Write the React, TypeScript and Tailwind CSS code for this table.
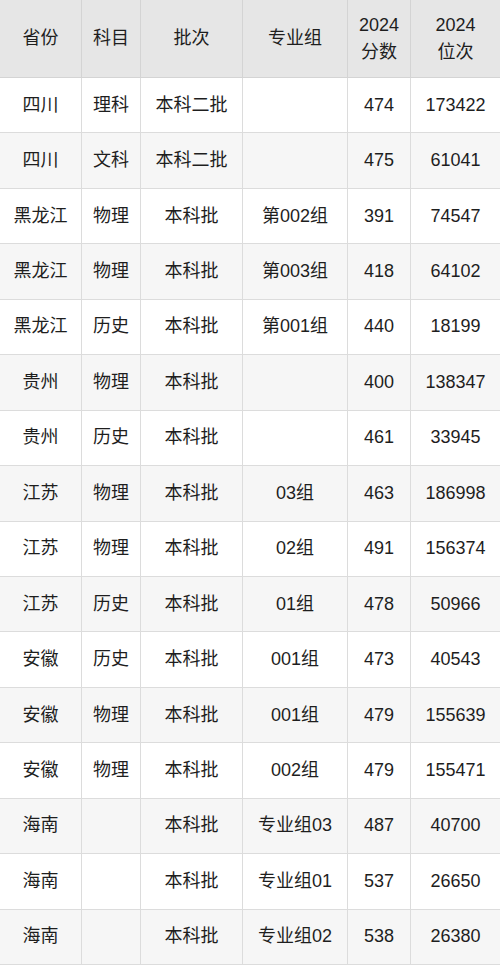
import React from "react";

const rows: string[][] = [
  ["四川", "理科", "本科二批", "", "474", "173422"],
  ["四川", "文科", "本科二批", "", "475", "61041"],
  ["黑龙江", "物理", "本科批", "第002组", "391", "74547"],
  ["黑龙江", "物理", "本科批", "第003组", "418", "64102"],
  ["黑龙江", "历史", "本科批", "第001组", "440", "18199"],
  ["贵州", "物理", "本科批", "", "400", "138347"],
  ["贵州", "历史", "本科批", "", "461", "33945"],
  ["江苏", "物理", "本科批", "03组", "463", "186998"],
  ["江苏", "物理", "本科批", "02组", "491", "156374"],
  ["江苏", "历史", "本科批", "01组", "478", "50966"],
  ["安徽", "历史", "本科批", "001组", "473", "40543"],
  ["安徽", "物理", "本科批", "001组", "479", "155639"],
  ["安徽", "物理", "本科批", "002组", "479", "155471"],
  ["海南", "", "本科批", "专业组03", "487", "40700"],
  ["海南", "", "本科批", "专业组01", "537", "26650"],
  ["海南", "", "本科批", "专业组02", "538", "26380"],
];

const font = {
  fontFamily: '"Liberation Sans", "Noto Sans CJK SC", sans-serif',
};

export default function App() {
  return (
    <div
      className="w-[500px] h-[965px] bg-white text-[#1e1e1e] text-[18px] overflow-hidden"
      style={font}
    >
      <div className="grid grid-cols-[82px_59px_102px_105px_63px_89px]">
        {["省份", "科目", "批次", "专业组"].map((h, i) => (
          <div
            key={h}
            className={`h-[78px] bg-[#e6e6e6] border-b border-[#d4d4d4] flex items-center justify-center ${i < 5 ? "border-r" : ""}`}
          >
            {h}
          </div>
        ))}
        <div className="h-[78px] bg-[#e6e6e6] border-b border-r border-[#d4d4d4] flex flex-col items-center justify-center leading-[27px]">
          <span>2024</span>
          <span>分数</span>
        </div>
        <div className="h-[78px] bg-[#e6e6e6] border-b border-[#d4d4d4] flex flex-col items-center justify-center leading-[27px]">
          <span>2024</span>
          <span>位次</span>
        </div>
        {rows.map((r, ri) =>
          r.map((c, ci) => (
            <div
              key={`${ri}-${ci}`}
              className={`h-[55.44px] border-b border-[#dcdcdc] flex items-center justify-center ${ci < 5 ? "border-r" : ""} ${ri % 2 === 1 ? "bg-[#f6f6f6]" : "bg-white"}`}
            >
              {c}
            </div>
          ))
        )}
      </div>
    </div>
  );
}
